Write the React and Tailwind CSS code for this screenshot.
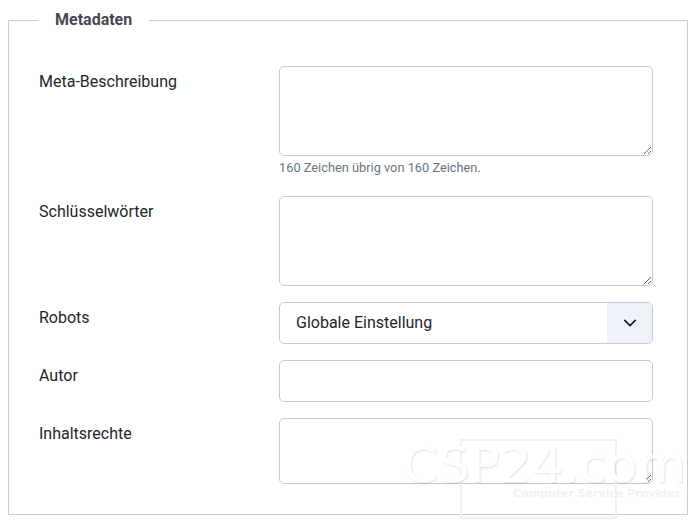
import React from "react";

const inputBase =
  "block w-full rounded-[5px] border border-[#c2cad4] bg-white text-[16px] text-[#22262a] outline-none";

const Row = ({ label, children }) => (
  <div className="flex">
    <div className="w-[240px] shrink-0 pt-[4px] text-[16px] leading-[24px] text-[#22262a]">
      {label}
    </div>
    <div className="w-[374px]">{children}</div>
  </div>
);

const TextArea = ({ h }) => (
  <textarea className={`${inputBase} resize-y px-3 py-2 ${h}`} />
);

export default function App() {
  return (
    <div
      className="relative h-[531px] w-[696px] overflow-hidden bg-white pt-2"
      style={{ fontFamily: "Roboto, 'Noto Sans', sans-serif" }}
    >
      <fieldset className="mx-2 h-[507px] border border-[#c5ccd6] px-[30px] pb-[31px]">
        <legend className="-ml-px px-[17px] text-[16px] font-bold leading-[24px] text-[#454a50]">
          Metadaten
        </legend>

        <div className="flex flex-col gap-4 pt-[34px]">
          <Row label="Meta-Beschreibung">
            <TextArea h="h-[90px]" />
            <div className="mb-[2px] mt-[2px] text-[12.8px] leading-[20px] text-[#6c757d]">
              160 Zeichen übrig von 160 Zeichen.
            </div>
          </Row>

          <Row label="Schlüsselwörter">
            <TextArea h="h-[90px]" />
          </Row>

          <Row label="Robots">
            <div className={`${inputBase} flex h-[42px] items-stretch overflow-hidden`}>
              <div className="flex flex-1 items-center pl-4">Globale Einstellung</div>
              <div className="flex w-[45px] items-center justify-center bg-[#eef2f8]">
                <svg width="14" height="14" viewBox="0 0 16 16" fill="none">
                  <path
                    d="M2 5l6 6 6-6"
                    stroke="#1c1f23"
                    strokeWidth="2"
                    strokeLinecap="round"
                    strokeLinejoin="round"
                  />
                </svg>
              </div>
            </div>
          </Row>

          <Row label="Autor">
            <input className={`${inputBase} h-[42px] px-4`} />
          </Row>

          <Row label="Inhaltsrechte">
            <TextArea h="h-[66px]" />
          </Row>
        </div>
      </fieldset>

      {/* watermark */}
      <div className="pointer-events-none absolute left-[460px] top-[439px] h-[80px] w-[157px] border-2 border-[#f1f1f1]" />
      <div
        className="pointer-events-none absolute left-[403px] top-[445px] text-[50px] leading-[40px] text-white"
        style={{ fontFamily: "'DejaVu Sans', sans-serif", textShadow: "1px 1px 2px rgba(0,0,0,0.12)" }}
      >
        CSP24.com
      </div>
      <div
        className="pointer-events-none absolute left-[513px] top-[487px] text-[11px] font-bold leading-[13px] text-[#f1f1f1]"
        style={{ fontFamily: "'DejaVu Sans', sans-serif" }}
      >
        Computer Service Provider
      </div>
    </div>
  );
}
